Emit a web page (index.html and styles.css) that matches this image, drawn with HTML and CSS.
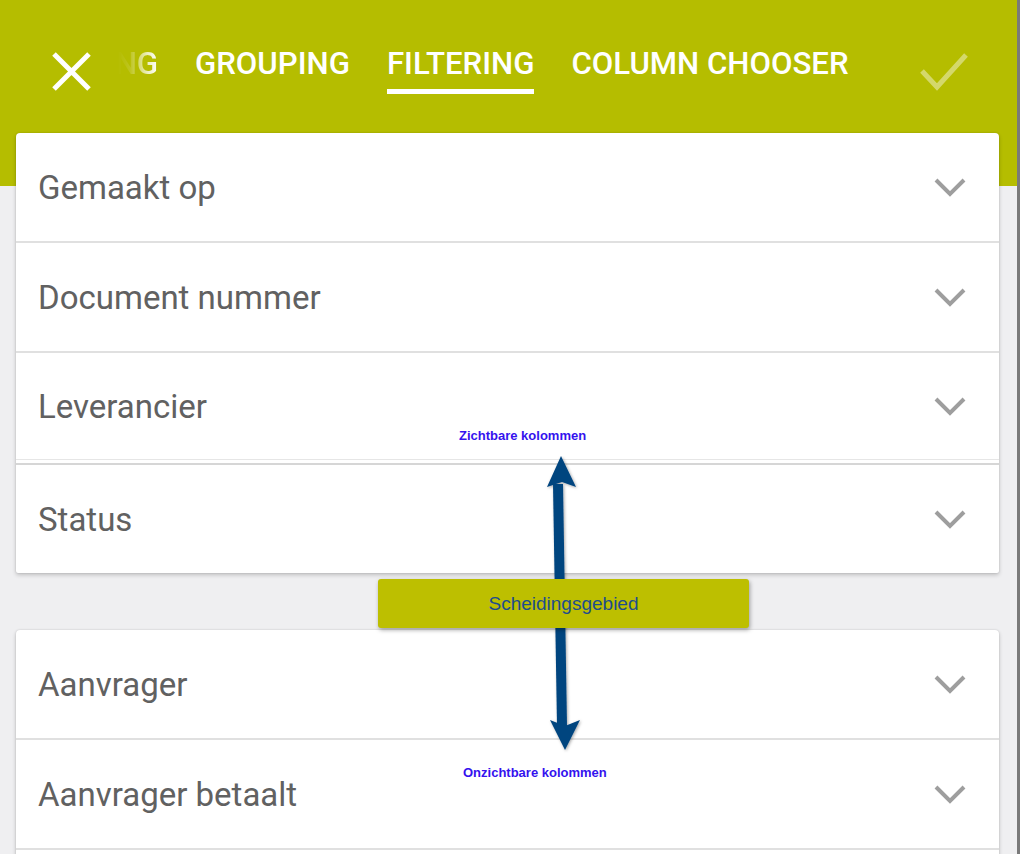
FILE: index.html
```html
<!DOCTYPE html>
<html lang="nl">
<head>
<meta charset="utf-8">
<title>Kolommen</title>
<link rel="stylesheet" href="styles.css">
</head>
<body>
<div class="app">
  <header class="toolbar">
    <button class="icon-btn close-btn" aria-label="Sluiten">
      <svg width="39" height="39" viewBox="0 0 39 39"><path d="M2 2 L37 37 M37 2 L2 37" stroke="#fff" stroke-width="5" fill="none"/></svg>
    </button>
    <nav class="tabs">
      <div class="tab-clip"><div class="tab">SORTING</div></div>
      <div class="tab">GROUPING</div>
      <div class="tab active">FILTERING</div>
      <div class="tab">COLUMN CHOOSER</div>
    </nav>
    <button class="icon-btn confirm-btn" aria-label="Bevestigen">
      <svg width="48" height="39" viewBox="0 0 48 39"><path d="M2 19 L17 35 L46 3" stroke="#fff" stroke-width="5" fill="none"/></svg>
    </button>
  </header>

  <main class="content">
    <section class="card">
      <div class="row"><span class="label">Gemaakt op</span><svg class="chev" width="32" height="20" viewBox="0 0 32 20"><path d="M2 3 L16 17 L30 3" stroke="#9e9e9e" stroke-width="4" fill="none"/></svg></div>
      <div class="row"><span class="label">Document nummer</span><svg class="chev" width="32" height="20" viewBox="0 0 32 20"><path d="M2 3 L16 17 L30 3" stroke="#9e9e9e" stroke-width="4" fill="none"/></svg></div>
      <div class="row last-visible"><span class="label">Leverancier</span><svg class="chev" width="32" height="20" viewBox="0 0 32 20"><path d="M2 3 L16 17 L30 3" stroke="#9e9e9e" stroke-width="4" fill="none"/></svg></div>
      <div class="row split"><span class="label">Status</span><svg class="chev" width="32" height="20" viewBox="0 0 32 20"><path d="M2 3 L16 17 L30 3" stroke="#9e9e9e" stroke-width="4" fill="none"/></svg></div>
    </section>

    <section class="card card-hidden">
      <div class="row"><span class="label">Aanvrager</span><svg class="chev" width="32" height="20" viewBox="0 0 32 20"><path d="M2 3 L16 17 L30 3" stroke="#9e9e9e" stroke-width="4" fill="none"/></svg></div>
      <div class="row"><span class="label">Aanvrager betaalt</span><svg class="chev" width="32" height="20" viewBox="0 0 32 20"><path d="M2 3 L16 17 L30 3" stroke="#9e9e9e" stroke-width="4" fill="none"/></svg></div>
      <div class="row row-empty"></div>
    </section>
  </main>

  <div class="note note-visible">Zichtbare kolommen</div>
  <svg class="arrow" width="60" height="320" viewBox="0 0 60 320">
    <defs>
      <filter id="sh" x="-50%" y="-10%" width="200%" height="120%">
        <feDropShadow dx="1" dy="1" stdDeviation="1.5" flood-color="#000" flood-opacity="0.35"/>
      </filter>
    </defs>
    <g filter="url(#sh)" fill="#00457f">
      <path d="M22 28 L26 270 L16 270 L12 28 Z"/>
      <path d="M20 0 L35 31 L21 26 L6 31 Z"/>
      <path d="M24 294 L9 264 L24 270 L39 264 Z"/>
    </g>
  </svg>
  <div class="divider-box">Scheidingsgebied</div>
  <div class="note note-hidden">Onzichtbare kolommen</div>
</div>
</body>
</html>
```
FILE: styles.css
```css
html, body {
  margin: 0;
  padding: 0;
  height: 100%;
  overflow: hidden;
}
body {
  background: #efeff1;
  font-family: Roboto, "Noto Sans", sans-serif;
}
.app {
  position: relative;
  width: 1017px;
  height: 854px;
  border-right: 3px solid #7a7a7a;
  overflow: hidden;
}
.toolbar {
  height: 133px;
  box-sizing: border-box;
  background: #b5bd00;
  display: flex;
  align-items: flex-start;
  padding-top: 49px;
}
.icon-btn {
  background: none;
  border: 0;
  padding: 0;
  margin-top: 3px;
  display: block;
  line-height: 0;
}
.close-btn {
  margin-left: 52px;
}
.confirm-btn {
  margin-left: auto;
  margin-right: 49px;
  opacity: 0.42;
}
.tabs {
  margin-left: 27px;
  display: flex;
  gap: 37px;
}
.tab-clip {
  width: 40px;
  display: flex;
  justify-content: flex-end;
  overflow: hidden;
  -webkit-mask-image: linear-gradient(to right, transparent 0, rgba(0,0,0,0.12) 12px, rgba(0,0,0,0.7) 28px, #000 40px);
  mask-image: linear-gradient(to right, transparent 0, rgba(0,0,0,0.12) 12px, rgba(0,0,0,0.7) 28px, #000 40px);
}
.tab {
  flex: none;
  color: #fff;
  font-size: 31.2px;
  font-weight: 500;
  line-height: 30px;
  padding-bottom: 10px;
  border-bottom: 5px solid transparent;
  white-space: nowrap;
}
.tab.active {
  border-bottom-color: #fff;
}
.content {
  background: linear-gradient(to bottom, #b5bd00 53px, #efeff1 53px);
  padding: 0 18px 0 16px;
}
.card {
  background: #fff;
  border-radius: 4px 4px 2px 2px;
  box-shadow: 0 2px 4px rgba(0,0,0,0.2), 0 0 2px rgba(0,0,0,0.14);
}
.card-hidden {
  margin-top: 57px;
}
.row {
  height: 110px;
  box-sizing: border-box;
  display: flex;
  align-items: center;
  justify-content: space-between;
  padding: 0 33px 0 22px;
  border-top: 2px solid #e0e0e0;
}
.row:first-child {
  height: 108px;
  border-top: 0;
}
.row.last-visible {
  height: 109px;
  border-bottom: 1px solid #e6e6e6;
}
.row.split {
  margin-top: 3px;
  border-top-color: #d6d6d6;
}
.label {
  font-size: 33px;
  color: #616161;
}
.chev {
  display: block;
}
.note {
  position: absolute;
  font-family: "Liberation Sans", Arial, sans-serif;
  font-weight: bold;
  font-size: 13px;
  color: #3412ee;
  white-space: nowrap;
}
.note-visible {
  left: 459px;
  top: 428px;
}
.note-hidden {
  left: 463px;
  top: 765px;
}
.arrow {
  position: absolute;
  left: 541px;
  top: 456px;
}
.divider-box {
  position: absolute;
  left: 378px;
  top: 579px;
  width: 371px;
  height: 49px;
  background: #bdbf00;
  border-radius: 3px;
  box-shadow: 1px 2px 4px rgba(0,0,0,0.35);
  display: flex;
  align-items: center;
  justify-content: center;
  font-family: "Liberation Sans", Arial, sans-serif;
  font-size: 19px;
  color: #1d4d8c;
}
```
